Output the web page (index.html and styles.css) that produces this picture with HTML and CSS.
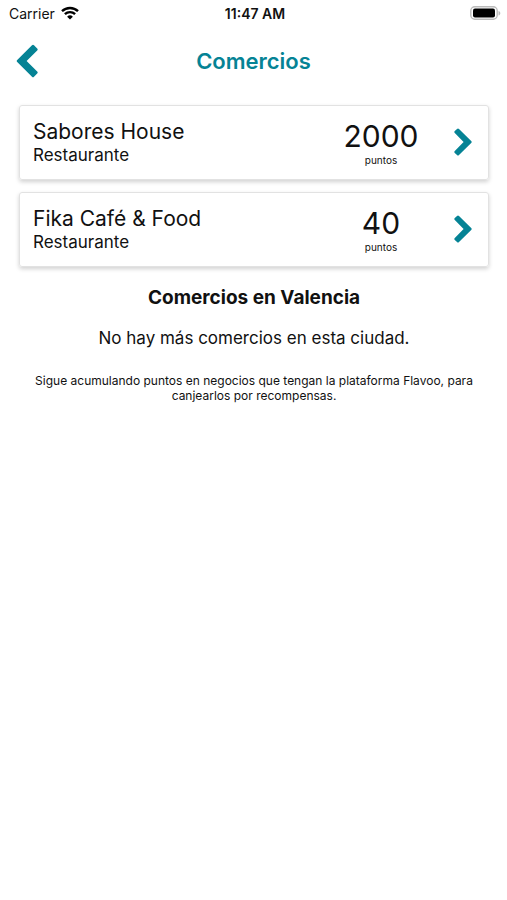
FILE: index.html
```html
<!DOCTYPE html>
<html lang="es">
<head>
    <meta charset="UTF-8">
    <meta name="viewport" content="width=device-width, initial-scale=1.0">
    <title>Comercios</title>
    <link rel="stylesheet" href="styles.css">
</head>
<body>

    <div class="status-bar">
        <div class="carrier">
            <span>Carrier</span>
            <svg class="wifi" viewBox="0 0 18 14" aria-hidden="true">
                <path d="M1 5.2a11.5 11.5 0 0 1 16 0M3.9 8.2a7.3 7.3 0 0 1 10.2 0" fill="none" stroke="#000" stroke-width="2.4"/>
                <path d="M9 13.6 6.1 10.7a4.1 4.1 0 0 1 5.8 0z"/>
            </svg>
        </div>
        <span class="time">11:47 AM</span>
        <svg class="battery" viewBox="0 0 31 14" aria-hidden="true">
            <rect x="0.8" y="0.8" width="26.4" height="12.4" rx="4" fill="none" stroke="#bbb" stroke-width="1.4"/>
            <rect x="3" y="2.6" width="22" height="8.8" rx="2"/>
            <path d="M28.5 5v4.5c2.4-.7 2.4-3.8 0-4.5z" fill="#bbb"/>
        </svg>
    </div>

    <header class="top-bar">
        <button type="button" class="back" aria-label="Volver">
            <svg viewBox="0 0 22 34" aria-hidden="true"><path d="M16 1.2 1.2 16a1.4 1.4 0 0 0 0 2L16 32.8a1.4 1.4 0 0 0 2 0l3.2-3.2a1.4 1.4 0 0 0 0-2L10.6 17 21.2 6.4a1.4 1.4 0 0 0 0-2L18 1.2a1.4 1.4 0 0 0-2 0z"/></svg>
        </button>
        <h1>Comercios</h1>
    </header>

    <main>
        <a class="card" href="#sabores-house">
            <div class="shop">
                <h2>Sabores House</h2>
                <p>Restaurante</p>
            </div>
            <div class="points">
                <strong>2000</strong>
                <span>puntos</span>
            </div>
            <svg class="arrow" viewBox="0 0 18 28" aria-hidden="true"><path d="M5 .9 17.2 13a1.4 1.4 0 0 1 0 2L5 27.1a1.4 1.4 0 0 1-2 0L.8 24.9a1.4 1.4 0 0 1 0-2L9.6 14 .8 5.1a1.4 1.4 0 0 1 0-2L3 .9a1.4 1.4 0 0 1 2 0z"/></svg>
        </a>
        <a class="card" href="#fika">
            <div class="shop">
                <h2>Fika Café &amp; Food</h2>
                <p>Restaurante</p>
            </div>
            <div class="points">
                <strong>40</strong>
                <span>puntos</span>
            </div>
            <svg class="arrow" viewBox="0 0 18 28" aria-hidden="true"><path d="M5 .9 17.2 13a1.4 1.4 0 0 1 0 2L5 27.1a1.4 1.4 0 0 1-2 0L.8 24.9a1.4 1.4 0 0 1 0-2L9.6 14 .8 5.1a1.4 1.4 0 0 1 0-2L3 .9a1.4 1.4 0 0 1 2 0z"/></svg>
        </a>

        <section class="city">
            <h2>Comercios en Valencia</h2>
            <p class="empty">No hay más comercios en esta ciudad.</p>
            <p class="hint">Sigue acumulando puntos en negocios que tengan la plataforma Flavoo, para canjearlos por recompensas.</p>
        </section>
    </main>

</body>
</html>
```
FILE: styles.css
```css
* {
    box-sizing: border-box;
}
body {
    margin: 0;
    background-color: #fff;
    color: #111;
    font-family: Inter, "Liberation Sans", sans-serif;
}
h1, h2, p {
    margin: 0;
}

/* Status bar */
.status-bar {
    display: grid;
    grid-template-columns: 1fr auto 1fr;
    align-items: center;
    height: 26px;
    padding: 0 6px 0 9px;
    font-size: 14px;
}
.carrier {
    display: flex;
    align-items: center;
    gap: 6px;
}
.wifi {
    width: 18px;
    height: 14px;
}
.time {
    font-weight: 600;
}
.battery {
    width: 31px;
    height: 14px;
    justify-self: end;
}

/* Title bar */
.top-bar {
    display: grid;
    grid-template-columns: 22px 1fr 22px;
    align-items: center;
    height: 69px;
    padding: 0 16px;
}
.back {
    border: 0;
    padding: 0;
    background: none;
    cursor: pointer;
}
.back svg {
    display: block;
    width: 22px;
    height: 34px;
    fill: #058395;
}
.top-bar h1 {
    color: #058395;
    font-size: 22px;
    font-weight: 600;
    text-align: center;
}

/* Shops */
main {
    padding: 10px 18px 10px 19px;
}
.card {
    display: flex;
    align-items: center;
    height: 75px;
    margin-bottom: 12px;
    padding: 0 16px 2px 13px;
    border: 1px solid #e2e2e2;
    border-radius: 3px;
    box-shadow: 0 2px 4px rgba(0,0,0,0.18);
    color: inherit;
    text-decoration: none;
}
.shop {
    flex: 1;
}
.shop h2 {
    font-size: 21px;
    font-weight: 400;
    line-height: 26px;
}
.shop p {
    font-size: 17px;
    line-height: 20px;
}
.points {
    width: 110px;
    text-align: center;
}
.points strong {
    display: block;
    font-size: 30px;
    font-weight: 400;
    line-height: 36px;
}
.points span {
    display: block;
    font-size: 10px;
    line-height: 12px;
}
.arrow {
    width: 18px;
    height: 28px;
    margin-left: 18px;
    fill: #058395;
}

/* City */
.city {
    text-align: center;
}
.city h2 {
    margin-top: 19px;
    font-size: 19px;
    font-weight: 700;
    line-height: 24px;
}
.empty {
    margin-top: 16px;
    font-size: 17px;
    line-height: 24px;
}
.hint {
    margin-top: 23px;
    font-size: 12px;
    line-height: 15px;
}
```
